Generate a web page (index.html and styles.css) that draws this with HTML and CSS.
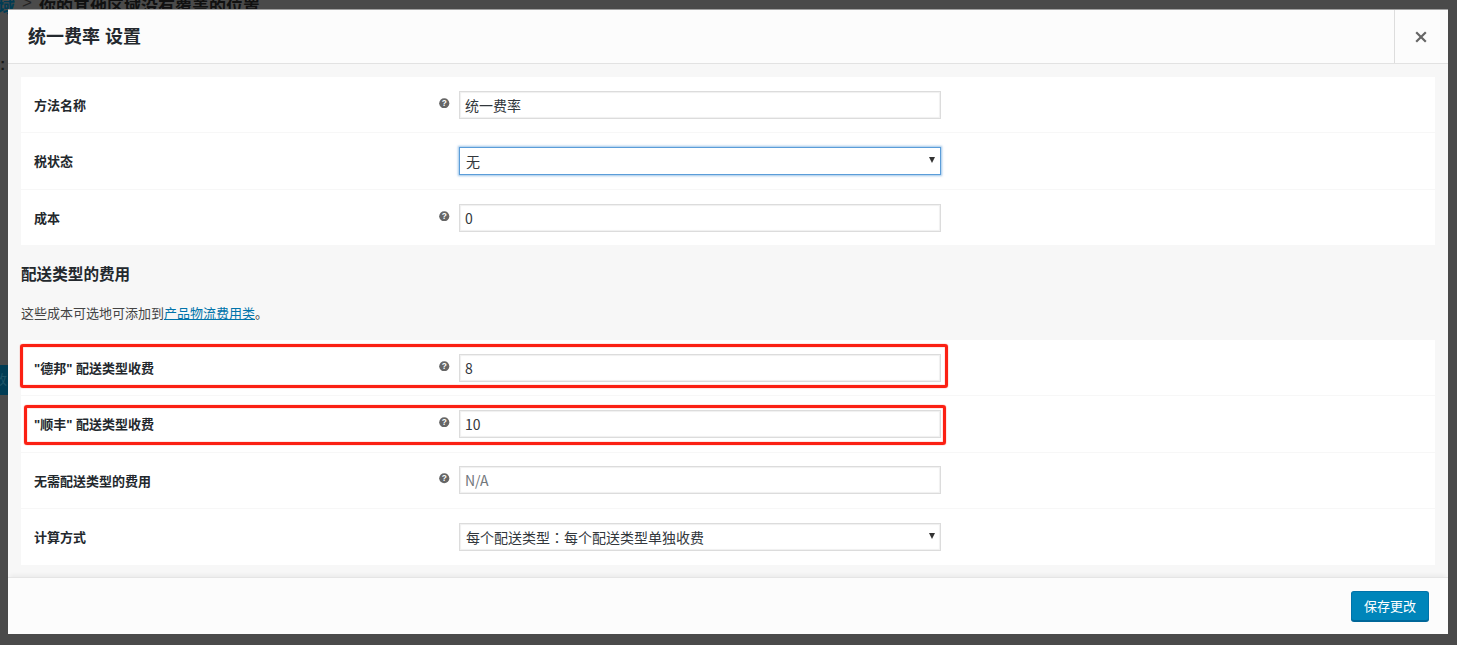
FILE: index.html
```html
<!DOCTYPE html>
<html lang="zh-CN">
<head>
<meta charset="utf-8">
<title>统一费率 设置</title>
<link rel="stylesheet" href="styles.css">
</head>
<body>
<div class="page">
  <div class="behind">
    <div class="crumb"><a class="crumb-link">区域</a><span class="crumb-sep">&gt;</span><span>你的其他区域没有覆盖的位置</span></div>
    <div class="behind-char">:</div>
    <div class="behind-btn">改</div>
  </div>
  <section class="modal">
    <header class="modal-head">
      <h1 class="modal-title">统一费率 设置</h1>
      <button class="close" aria-label="关闭">
        <svg width="12" height="12" viewBox="0 0 12 12"><path d="M1.2 1.2 10.800 10.800M10.800 1.200 1.200 10.800" stroke="#666" stroke-width="2.200" fill="none"/></svg>
      </button>
    </header>
    <div class="modal-body">
      <div class="panel panel-top">
        <div class="row">
          <label class="row-label">方法名称</label>
          <span class="help"><svg class="help-icon" viewBox="0 0 12 12"><circle cx="6" cy="6" r="5.800" fill="#666"/><text x="6" y="9.300" text-anchor="middle" class="help-q">?</text></svg></span>
          <input class="field" value="统一费率">
        </div>
        <div class="row">
          <label class="row-label">税状态</label>
          <span class="help"></span>
          <div class="field select focus">无<span class="caret"></span></div>
        </div>
        <div class="row">
          <label class="row-label">成本</label>
          <span class="help"><svg class="help-icon" viewBox="0 0 12 12"><circle cx="6" cy="6" r="5.800" fill="#666"/><text x="6" y="9.300" text-anchor="middle" class="help-q">?</text></svg></span>
          <input class="field" value="0">
        </div>
      </div>
      <h2 class="section-title">配送类型的费用</h2>
      <p class="section-note">这些成本可选地可添加到<a class="note-link">产品物流费用类</a>。</p>
      <div class="panel">
        <div class="row">
          <label class="row-label">"德邦" 配送类型收费</label>
          <span class="help"><svg class="help-icon" viewBox="0 0 12 12"><circle cx="6" cy="6" r="5.800" fill="#666"/><text x="6" y="9.300" text-anchor="middle" class="help-q">?</text></svg></span>
          <input class="field" value="8">
        </div>
        <div class="row">
          <label class="row-label">"顺丰" 配送类型收费</label>
          <span class="help"><svg class="help-icon" viewBox="0 0 12 12"><circle cx="6" cy="6" r="5.800" fill="#666"/><text x="6" y="9.300" text-anchor="middle" class="help-q">?</text></svg></span>
          <input class="field" value="10">
        </div>
        <div class="row">
          <label class="row-label">无需配送类型的费用</label>
          <span class="help"><svg class="help-icon" viewBox="0 0 12 12"><circle cx="6" cy="6" r="5.800" fill="#666"/><text x="6" y="9.300" text-anchor="middle" class="help-q">?</text></svg></span>
          <input class="field" placeholder="N/A">
        </div>
        <div class="row">
          <label class="row-label">计算方式</label>
          <span class="help"></span>
          <div class="field select">每个配送类型<span class="colon">：</span>每个配送类型单独收费<span class="caret"></span></div>
        </div>
      </div>
    </div>
    <footer class="modal-foot">
      <button class="save">保存更改</button>
    </footer>
  </section>
  <div class="mark mark-one"></div>
  <div class="mark mark-two"></div>
</div>
</body>
</html>
```

FILE: styles.css
```css
* { box-sizing: border-box; }
html, body { margin: 0; padding: 0; }
body {
  font-family: "Liberation Sans", "Noto Sans CJK SC", sans-serif;
  font-size: 13px;
  color: #23282d;
  background: #4a4a4a;
}
.page {
  position: relative;
  width: 1457px;
  height: 645px;
  overflow: hidden;
  background: #4a4a4a;
}
.behind { color: #111; }
.crumb {
  position: absolute;
  left: -19px;
  top: -7px;
  font-size: 17px;
  font-weight: 700;
  white-space: nowrap;
  display: flex;
  gap: 7px;
}
.crumb-link { color: #003c54; }
.crumb-sep { font-weight: 400; color: #222; }
.behind-char {
  position: absolute;
  left: 0;
  top: 56px;
  font-size: 16px;
  font-weight: 700;
  color: #1a1a1a;
}
.behind-btn {
  position: absolute;
  left: 0;
  top: 365px;
  width: 8px;
  height: 30px;
  background: #003c54;
  color: #1d5468;
  font-size: 13px;
  line-height: 30px;
  overflow: hidden;
  text-indent: -6px;
}
.modal {
  position: absolute;
  left: 8px;
  top: 9px;
  width: 1440px;
  height: 625px;
  display: flex;
  flex-direction: column;
  background: #f7f7f7;
  border-top: 1px solid #a0a0a0;
}
.modal-head {
  height: 54px;
  flex: none;
  display: flex;
  align-items: stretch;
  justify-content: space-between;
  background: #fcfcfc;
  border-bottom: 1px solid #e2e2e2;
}
.modal-title {
  margin: 0;
  padding: 1px 0 0 20px;
  font-size: 18px;
  line-height: 53px;
  font-weight: 700;
  color: #23282d;
}
.close {
  width: 54px;
  padding: 1px 1px 0 0;
  display: flex;
  align-items: center;
  justify-content: center;
  background: transparent;
  border: 0;
  border-left: 1px solid #ddd;
}
.modal-body {
  flex: 1;
  padding: 13px 13px 0;
  min-height: 0;
}
.panel { background: #fff; }
.panel-top { height: 168px; overflow: hidden; }
.row {
  display: flex;
  align-items: center;
  height: 56.250px;
  padding-left: 13px;
  border-bottom: 1px solid #f7f7f7;
}
.row:last-child { border-bottom: 0; }
.row-label {
  width: 405px;
  flex: none;
  font-weight: 700;
  color: #23282d;
}
.help {
  width: 20px;
  height: 28px;
  flex: none;
  display: flex;
  justify-content: flex-start;
  padding-top: 7px;
}
.help-icon { width: 10.500px; height: 10.500px; }
.help-q { font: 700 9.500px "Liberation Sans", sans-serif; fill: #fff; }
.field {
  width: 482px;
  height: 28px;
  flex: none;
  padding: 0 5px;
  border: 1px solid #dcdcdc;
  box-shadow: inset 0 0 1px 1px #f0f0f0;
  background: #fff;
  font-family: "Noto Sans CJK SC", "Liberation Sans", sans-serif;
  font-size: 14px;
  color: #32373c;
  outline: 0;
}
.field::placeholder { color: #72777c; opacity: 1; }
.select {
  position: relative;
  display: flex;
  align-items: center;
  padding-left: 6px;
}
.colon { font-family: "Noto Sans CJK TC", sans-serif; }
.focus {
  border-color: #5b9dd9;
  box-shadow: 0 0 2px 1px rgba(91,157,217,.6);
}
.caret {
  position: absolute;
  right: 5px;
  top: 9px;
  width: 0;
  height: 0;
  border-left: 3.500px solid transparent;
  border-right: 3.500px solid transparent;
  border-top: 6px solid #333;
}
.section-title {
  margin: 0;
  padding-top: 19px;
  font-size: 15.600px;
  line-height: 21px;
  font-weight: 700;
  color: #23282d;
}
.section-note {
  margin: 0;
  padding-top: 19px;
  height: 55px;
  font-size: 13px;
  line-height: 20px;
  color: #444;
}
.note-link { color: #0073aa; text-decoration: underline; }
.modal-foot {
  height: 57px;
  flex: none;
  display: flex;
  justify-content: flex-end;
  align-items: flex-start;
  padding: 13px 19px 0 0;
  background: #fcfcfc;
  border-top: 1px solid #e5e5e5;
  box-shadow: 0 -4px 4px -2px rgba(0,0,0,.05);
}
.save {
  width: 78px;
  height: 30px;
  padding: 0 0 1px;
  background: #0085ba;
  border: 1px solid #0073aa;
  border-bottom-color: #006799;
  border-radius: 3px;
  box-shadow: 0 1px 0 #006799;
  color: #fff;
  font-family: "Liberation Sans", "Noto Sans CJK SC", sans-serif;
  font-size: 13px;
}
.mark {
  position: absolute;
  border: 3px solid #fb2013;
  border-radius: 3px;
  box-shadow: 0 0 1px #fb2013, inset 0 0 1px #fb2013;
}
.mark-one { left: 20px; top: 344px; width: 928px; height: 44px; }
.mark-two { left: 24px; top: 405px; width: 922px; height: 40px; }
```
